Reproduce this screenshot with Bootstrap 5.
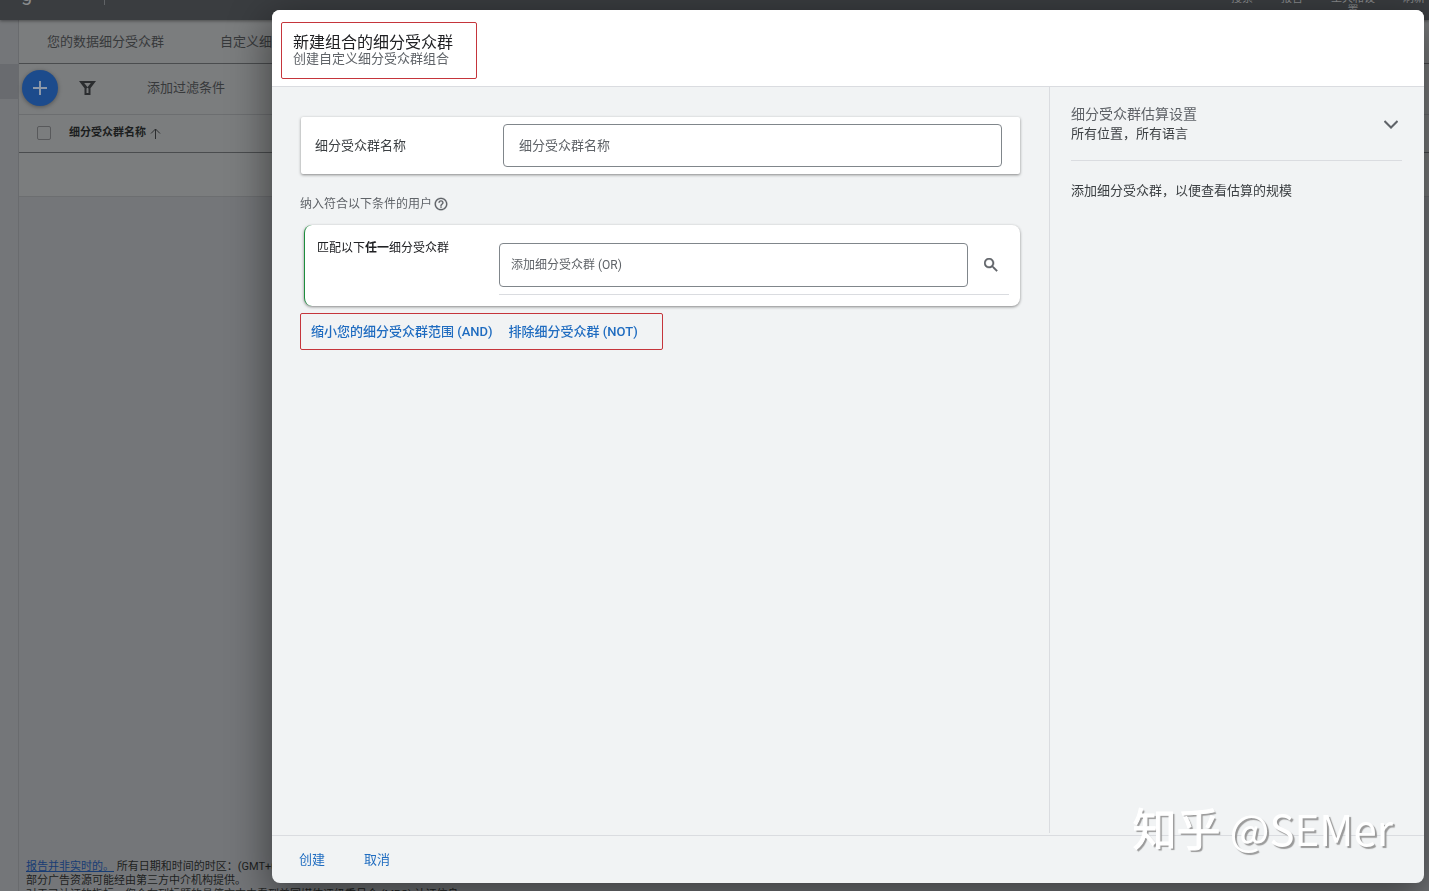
<!DOCTYPE html>
<html lang="zh-CN">
<head>
<meta charset="utf-8">
<meta name="viewport" content="width=device-width, initial-scale=1">
<title>新建组合的细分受众群</title>
<link href="https://cdn.jsdelivr.net/npm/bootstrap@5.3.0/dist/css/bootstrap.min.css" rel="stylesheet">
<script src="https://cdn.jsdelivr.net/npm/bootstrap@5.3.0/dist/js/bootstrap.bundle.min.js" defer></script>
<style>
body{font-family:Roboto,"Noto Sans CJK SC",sans-serif;font-size:13px;line-height:16px;color:#3c4043;background:#747679}
.fs-11{font-size:11px}.fs-12{font-size:12px}.fs-13{font-size:13px}.fs-14{font-size:14px}.fs-16{font-size:16px}
.backpage{height:100vh}
.appbar{height:20px;background:#3a3d40;color:#898b8d;box-shadow:0 1px 3px rgba(0,0,0,.4);z-index:1}
.brand{font-size:20px;line-height:20px;margin-top:-16px;padding-left:21px}
.brand-rule{width:1px;height:5px;background:#606366;margin-left:72px}
.tools{line-height:12px;text-align:center;margin-top:-7px;padding-right:4px;gap:28px}
.tools span{width:22px}
.tools .two-line{width:44px}
.rail{width:19px;border-right:1px solid #696b6e;padding-top:44px}
.rail-current{height:35px;background:#696b6f}
.tabs-row,.filter-row,.head-row,.empty-row{background:#7b7d7e;color:#37393b}
.tabs-row{height:44px;padding-left:28px;gap:56px;border-bottom:1px solid #4a4c4e}
.tabs-row a{color:#37393b}
.filter-row{height:51px;border-bottom:1px solid #6c6e70;padding:0 0 2px 3px}
.funnel{margin-left:21px;margin-right:50px}
.head-row{height:38px;border-bottom:1px solid #4a4c4e;padding:0 0 1px 18px;color:#1c1e20;gap:18px}
.empty-row{height:44px;border-bottom:1px solid #6c6e70}
.add-btn{width:36px;height:36px;background:#1c4b8c;box-shadow:0 1px 4px rgba(0,0,0,.35)}
.head-row .form-check-input{width:14px;height:14px;background:transparent;border:1px solid #58595b;border-radius:2px}
.notes{line-height:14px;padding-left:7px;margin-bottom:-11px;color:#1d1f21}
.notes a{color:#173c74}
.overlay{padding:10px 5px 8px 272px;z-index:2}
.sheet{background:#f1f3f4;border-radius:8px;box-shadow:0 12px 40px 4px rgba(0,0,0,.45)}
.sheet-head{height:77px;padding:12px 9px 7px;border-bottom:1px solid #dadce0;background:#fff;border-radius:8px 8px 0 0}
.marked{border:1px solid #c5353b;border-radius:2px}
.title-box{width:196px;height:57px;padding:11px 11px 0}
.title-box h1{line-height:17px;color:#202124}
.muted{color:#5f6368}
.builder{padding:30px 29px 30px 28px}
.panel{background:#fff;box-shadow:0 1px 3px rgba(0,0,0,.45)}
.name-panel{height:57px;border-radius:2px;margin-left:1px;padding:0 18px 0 14px}
.label-name{width:188px}
.field{border:1px solid #80868b;border-radius:4px;font-size:13px;height:43px;padding:0 15px;background:#fff}
.field::placeholder{color:#5f6368;opacity:1}
.include-line{margin-top:22px;margin-bottom:13px;gap:2px}
.match-panel{height:81px;border-radius:8px;border-left:1px solid #1e8e3e;margin-left:4px;padding:18px 11px 0 12px}
.label-match{width:182px;line-height:10px;color:#202124}
.pick-row{border-bottom:1px solid #dadce0;padding-bottom:7px}
.pick-row .field{height:44px;font-size:12px;padding:0 11px}
.search-btn{width:41px;padding:0 0 0 5px}
.links-box{width:363px;height:37px;margin-top:7px;padding-left:10px;gap:16px}
.act{color:#1f6cc0}
.estimate{width:375px;border-left:1px solid #dadce0;padding:17px 22px 0 21px;margin-bottom:2px}
.estimate-top{border-bottom:1px solid #dadce0;padding-bottom:16px}
.estimate-top h2,.estimate-top p{line-height:20px}
.estimate-note{margin:22px 0 0}
.sheet-foot{height:48px;border-top:1px solid #dadce0;padding-left:27px;gap:39px}
.stamp{right:36px;bottom:33px;font-family:"Noto Sans CJK SC",sans-serif;font-size:42px;line-height:60px;color:#fff;text-shadow:2px 2px 1px #999;z-index:3}
.stamp-name{font-size:44px;-webkit-text-stroke:1px #fff}
</style>
</head>
<body class="overflow-hidden">
<div class="backpage d-flex flex-column overflow-hidden">
  <header class="appbar position-relative flex-shrink-0 d-flex align-items-start">
    <div class="brand">g</div>
    <div class="brand-rule"></div>
    <div class="tools d-flex fs-11 ms-auto"><span>搜索</span><span>报告</span><span class="two-line">工具和设置</span><span>刷新</span></div>
  </header>
  <div class="d-flex flex-grow-1">
    <aside class="rail flex-shrink-0"><div class="rail-current"></div></aside>
    <main class="flex-grow-1 d-flex flex-column">
      <nav class="tabs-row d-flex align-items-center"><a class="text-decoration-none" href="#">您的数据细分受众群</a><a class="text-decoration-none" href="#">自定义细分</a></nav>
      <div class="filter-row d-flex align-items-center">
        <button class="add-btn btn rounded-circle border-0 p-0 d-flex align-items-center justify-content-center" type="button" aria-label="添加"><svg width="16" height="16" viewBox="0 0 16 16" stroke="#8d98a8" stroke-width="2"><path d="M8 1v14M1 8h14"/></svg></button>
        <svg class="funnel" width="18" height="16" viewBox="0 0 18 16" fill="none" stroke="#2b2d2f" stroke-width="2"><path d="M2 2h13L10.500 8v6h-4V8z"/><path d="M4 3l4 5M13 3L9 8"/></svg>
        <span>添加过滤条件</span>
      </div>
      <div class="head-row d-flex align-items-center">
        <input class="form-check-input m-0" type="checkbox" aria-label="全选">
        <span class="fs-11 fw-bold d-flex align-items-center gap-1">细分受众群名称<svg width="11" height="11" viewBox="0 0 11 11" fill="none" stroke="#2b2d2f"><path d="M5.500 11V1M1 5.500l4.500-4.500 4.500 4.500"/></svg></span>
      </div>
      <div class="empty-row"></div>
      <div class="notes fs-11 mt-auto text-nowrap"><a href="#">报告并非实时的。</a> 所有日期和时间的时区：(GMT+08:00)<br>部分广告资源可能经由第三方中介机构提供。<br>对于已认证的指标，您会在列标题的悬停文本中看到美国媒体评级委员会 (MRC) 认证信息</div>
    </main>
  </div>
</div>

<div class="overlay position-fixed top-0 start-0 w-100 h-100">
  <section class="sheet h-100 d-flex flex-column" role="dialog" aria-labelledby="sheet-title">
    <header class="sheet-head flex-shrink-0">
      <div class="title-box marked">
        <h1 class="fs-16 fw-normal m-0" id="sheet-title">新建组合的细分受众群</h1>
        <p class="muted m-0">创建自定义细分受众群组合</p>
      </div>
    </header>
    <div class="d-flex flex-grow-1">
      <div class="builder flex-grow-1">
        <div class="panel name-panel d-flex align-items-center">
          <label class="label-name flex-shrink-0" for="seg-name">细分受众群名称</label>
          <input class="field form-control" id="seg-name" type="text" placeholder="细分受众群名称">
        </div>
        <div class="include-line muted fs-12 d-flex align-items-center">纳入符合以下条件的用户
          <svg width="14" height="14" viewBox="1 1 22 22" fill="currentColor"><path d="M11 18h2v-2h-2v2zm1-16C6.480 2 2 6.480 2 12s4.480 10 10 10 10-4.480 10-10S17.520 2 12 2zm0 18c-4.410 0-8-3.590-8-8s3.590-8 8-8 8 3.590 8 8-3.590 8-8 8zm0-14c-2.210 0-4 1.790-4 4h2c0-1.100.9-2 2-2s2 .9 2 2c0 2-3 1.750-3 5h2c0-2.250 3-2.500 3-5 0-2.210-1.790-4-4-4z" stroke="currentColor" stroke-width=".3"/></svg>
        </div>
        <div class="panel match-panel d-flex align-items-start">
          <label class="label-match fs-12 flex-shrink-0" for="seg-add">匹配以下<b>任一</b>细分受众群</label>
          <div class="pick-row d-flex flex-grow-1">
            <input class="field form-control" id="seg-add" type="text" placeholder="添加细分受众群 (OR)">
            <button class="search-btn btn border-0 flex-shrink-0" type="button" aria-label="搜索"><svg class="d-block mx-auto" width="14" height="14" viewBox="3 3 18 18" fill="#5f6368" stroke="#5f6368" stroke-width=".5"><path d="M15.500 14h-.79l-.28-.27A6.470 6.470 0 0 0 16 9.500 6.500 6.500 0 1 0 9.500 16c1.610 0 3.090-.59 4.230-1.570l.27.28v.79l5 4.990L20.490 19l-4.990-5zm-6 0C7.010 14 5 11.990 5 9.500S7.010 5 9.500 5 14 7.010 14 9.500 11.990 14 9.500 14z"/></svg></button>
          </div>
        </div>
        <div class="links-box marked d-flex align-items-center fw-medium">
          <a class="act text-decoration-none" href="#">缩小您的细分受众群范围 (AND)</a>
          <a class="act text-decoration-none" href="#">排除细分受众群 (NOT)</a>
        </div>
      </div>
      <aside class="estimate flex-shrink-0">
        <div class="estimate-top d-flex align-items-center justify-content-between">
          <div><h2 class="fs-14 fw-normal muted m-0">细分受众群估算设置</h2><p class="m-0">所有位置，所有语言</p></div>
          <button class="btn border-0 p-0 me-1" type="button" aria-label="展开"><svg class="d-block" width="14" height="9" viewBox="0 0 14 9" fill="none" stroke="#5f6368" stroke-width="2"><path d="M.5 1L7 7.500 13.500 1"/></svg></button>
        </div>
        <p class="estimate-note">添加细分受众群，以便查看估算的规模</p>
      </aside>
    </div>
    <footer class="sheet-foot d-flex align-items-center flex-shrink-0">
      <button class="act btn btn-link fs-13 text-decoration-none border-0 p-0" type="button">创建</button>
      <button class="act btn btn-link fs-13 text-decoration-none border-0 p-0" type="button">取消</button>
    </footer>
  </section>
</div>
<div class="stamp position-fixed text-nowrap"><span class="stamp-name">知乎</span> @SEMer</div>
</body>
</html>
